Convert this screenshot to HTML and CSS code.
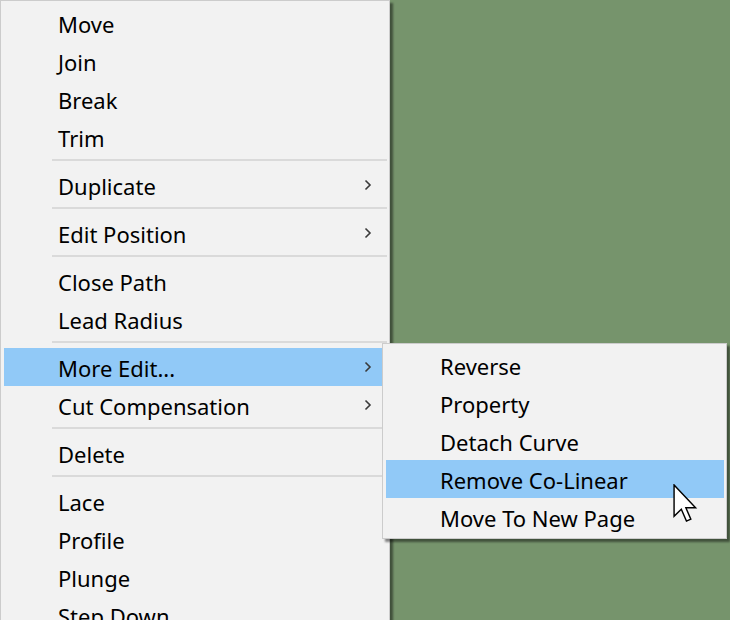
FILE: index.html
```html
<!DOCTYPE html>
<html>
<head>
<meta charset="utf-8">
<link rel="stylesheet" href="styles.css">
</head>
<body>
<div class="desktop">
  <div class="menu main-menu">
    <div class="item">Move</div>
    <div class="item">Join</div>
    <div class="item">Break</div>
    <div class="item">Trim</div>
    <div class="sep"></div>
    <div class="item">Duplicate<svg class="chev" viewBox="0 0 8 12"><path d="M1.5 1.5 L6 6 L1.5 10.5"/></svg></div>
    <div class="sep"></div>
    <div class="item">Edit Position<svg class="chev" viewBox="0 0 8 12"><path d="M1.5 1.5 L6 6 L1.5 10.5"/></svg></div>
    <div class="sep"></div>
    <div class="item">Close Path</div>
    <div class="item">Lead Radius</div>
    <div class="sep"></div>
    <div class="item active">More Edit...<svg class="chev" viewBox="0 0 8 12"><path d="M1.5 1.5 L6 6 L1.5 10.5"/></svg></div>
    <div class="item">Cut Compensation<svg class="chev" viewBox="0 0 8 12"><path d="M1.5 1.5 L6 6 L1.5 10.5"/></svg></div>
    <div class="sep"></div>
    <div class="item">Delete</div>
    <div class="sep"></div>
    <div class="item">Lace</div>
    <div class="item">Profile</div>
    <div class="item">Plunge</div>
    <div class="item">Step Down</div>
  </div>
  <div class="menu sub-menu">
    <div class="item">Reverse</div>
    <div class="item">Property</div>
    <div class="item">Detach Curve</div>
    <div class="item active">Remove Co-Linear</div>
    <div class="item">Move To New Page</div>
  </div>
  <svg class="cursor" viewBox="0 0 13 21" width="25" height="40">
    <path d="M0.5 0.5 L0.5 17 L4.3 13.3 L7 19.5 L9.3 18.5 L6.7 12.5 L11.8 12.5 Z" fill="#fff" stroke="#000" stroke-width="0.75" stroke-linejoin="miter"/>
  </svg>
</div>
</body>
</html>
```

FILE: styles.css
```css
html, body {
  margin: 0;
  padding: 0;
}
body {
  background: #76946c;
  font-family: "Noto Sans", "Open Sans", sans-serif;
  font-size: 22px;
  color: #000;
}
.desktop {
  position: relative;
  width: 730px;
  height: 620px;
  overflow: hidden;
}
.menu {
  background: #f2f2f2;
  border: 1px solid #cccccc;
  box-sizing: border-box;
  box-shadow: 3px 3px 2px rgba(0, 0, 0, 0.45);
}
.main-menu {
  width: 390px;
  padding: 3px 2px 3px 3px;
}
.sub-menu {
  position: absolute;
  left: 382px;
  top: 343px;
  width: 345px;
  padding: 2px 2px 2px 3px;
}
.item {
  height: 38px;
  display: flex;
  align-items: center;
  padding-left: 54px;
  padding-right: 15px;
  padding-top: 1px;
  box-sizing: border-box;
  white-space: nowrap;
}
.item.active {
  background: #91c9f7;
}
.chev {
  margin-left: auto;
  margin-top: -1px;
  width: 8px;
  height: 12px;
  fill: none;
  stroke: #3a3a3a;
  stroke-width: 1.6;
}
.sep {
  height: 10px;
  position: relative;
}
.sep::after {
  content: "";
  position: absolute;
  left: 48px;
  right: 0;
  top: 3px;
  height: 2px;
  background: #dadada;
}
.cursor {
  position: absolute;
  left: 673px;
  top: 484px;
}
```
